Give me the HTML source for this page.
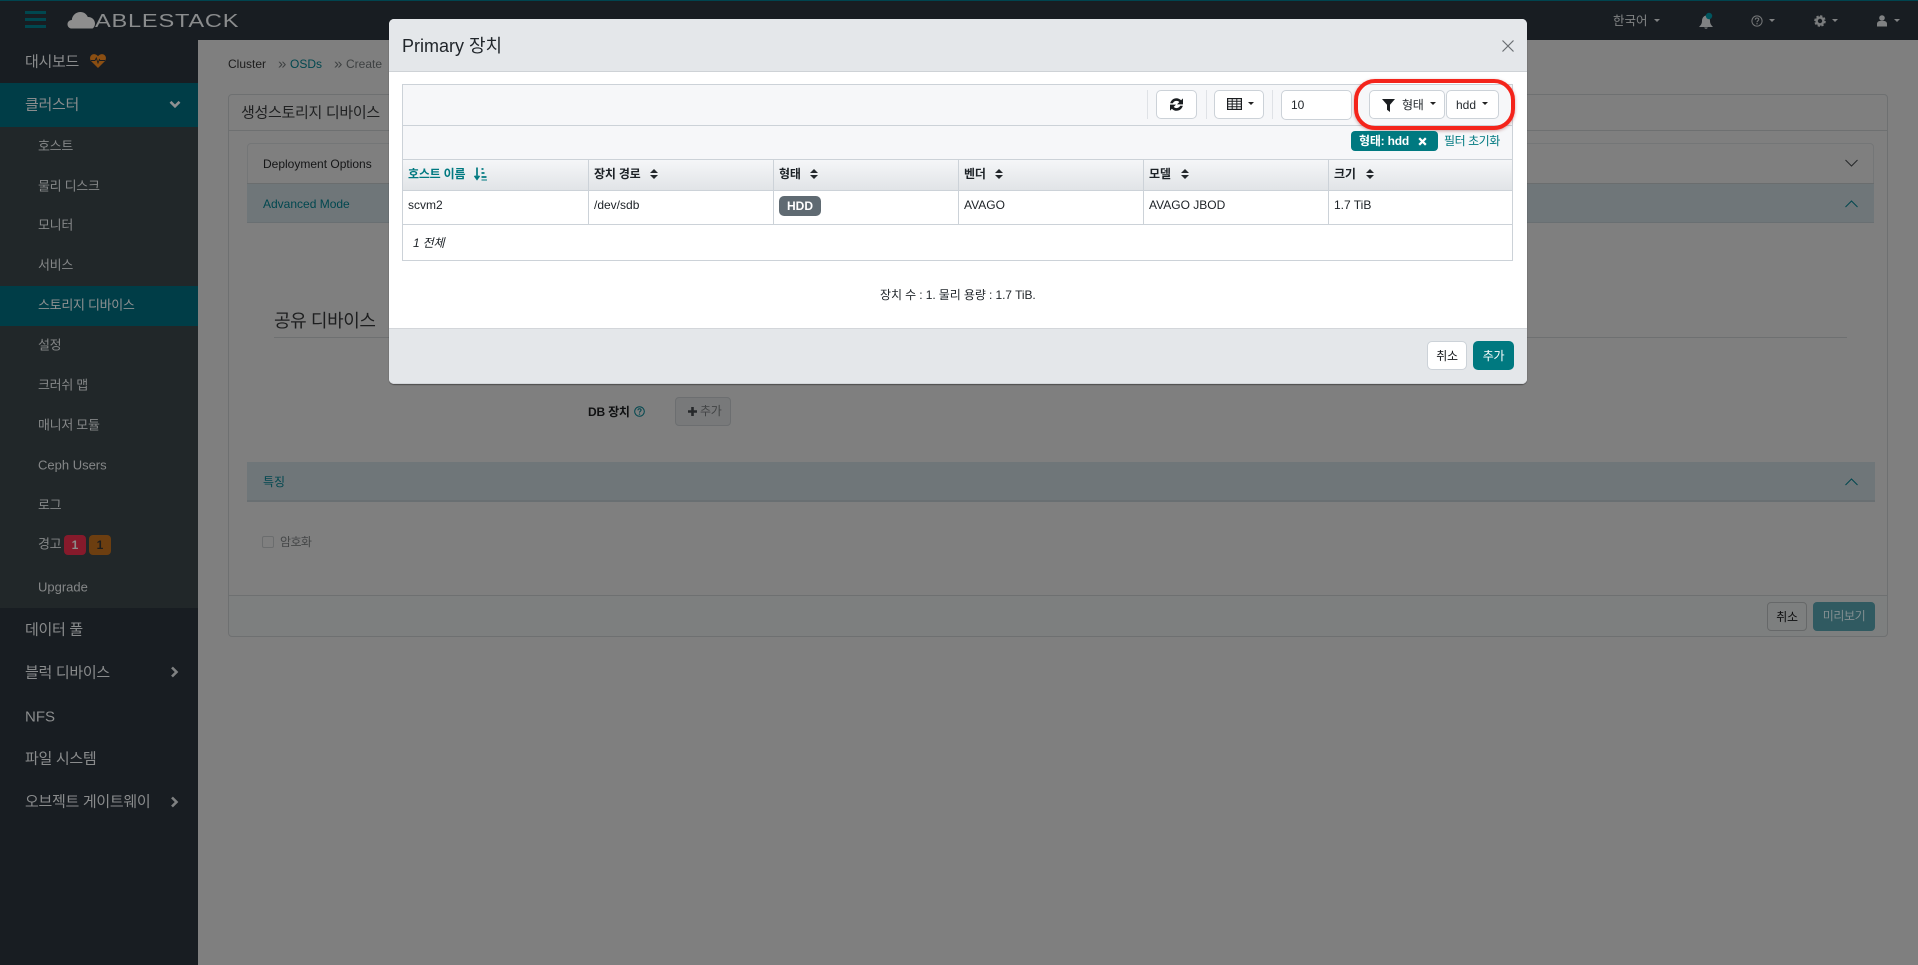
<!DOCTYPE html>
<html lang="ko">
<head>
<meta charset="utf-8">
<title>ABLESTACK</title>
<style>
html,body{margin:0;padding:0;width:1918px;height:965px;overflow:hidden;background:#7f7f7f;font-family:"Liberation Sans","Noto Sans CJK KR",sans-serif;}
.b{position:absolute;box-sizing:border-box;}
.t{position:absolute;white-space:nowrap;line-height:1;transform:translateY(-50%);}
svg{position:absolute;overflow:visible;}
.top{font-size:15px;color:#8a8c8d;left:25px;letter-spacing:-.3px}
.sub{font-size:13px;color:#858788;left:38px;letter-spacing:-.3px}
.th{font-size:12px;font-weight:bold;color:#1c2126;top:174px;letter-spacing:-.2px}
.td{font-size:12px;color:#1c2126;top:205px}
.btn{background:#fff;border:1px solid #ccd2d8;border-radius:5px;}
.caret{position:absolute;width:0;height:0;border-left:3.5px solid transparent;border-right:3.5px solid transparent;border-top:3.5px solid #222;}
.dcaret{border-top-color:#808283}
.sep{position:absolute;width:1px;background:#dfe2e6;top:90px;height:29px}
.vl{position:absolute;width:1px;background:#ccd2d8;top:159px;height:65px}
</style>
</head>
<body>
<!-- top bar -->
<div class="b" style="left:0;top:0;width:1918px;height:40px;background:#181d22;border-top:1px solid #00444f"></div>
<div class="b" style="left:25px;top:11px;width:21px;height:3px;background:#00474f"></div>
<div class="b" style="left:25px;top:18px;width:21px;height:3px;background:#00474f"></div>
<div class="b" style="left:25px;top:25px;width:21px;height:3px;background:#00474f"></div>
<svg style="left:67px;top:11px" width="29" height="18" viewBox="0 0 29 18"><path d="M5 17.5C2 17.5 .5 15.5 .5 13.2 .5 10.8 2.4 9 4.8 9 5.2 4.2 9 1 13.4 1 16.8 1 19.6 3 20.8 6 24.8 5.8 28 8.8 28 12.6 28 14.8 27 16.4 25.6 17.5Z" fill="#8e8e8e"/></svg>
<div class="t" style="left:95px;top:21px;font-size:18px;color:#8a8c8d;letter-spacing:.6px;transform:translateY(-50%) scaleX(1.31);transform-origin:left center;font-weight:normal">ABLESTACK</div>

<div class="t" style="left:1613px;top:21px;font-size:12.5px;color:#828485">한국어</div>
<div class="caret dcaret" style="left:1654px;top:19px"></div>
<svg style="left:1698px;top:12px" width="20" height="18" viewBox="0 0 20 18"><path d="M8 3.5C5.5 4 4 6.2 4 8.8 4 11.5 3 13 1 15H15C13 13 12 11.5 12 8.8 12 6.2 10.5 4 8 3.5ZM6.2 15.5A1.9 1.9 0 0 0 9.8 15.5Z" fill="#808283"/><circle cx="11" cy="4" r="3.2" fill="#00565f"/></svg>
<svg style="left:1751px;top:15px" width="12" height="12" viewBox="0 0 12 12"><circle cx="6" cy="6" r="5.1" fill="none" stroke="#767879" stroke-width="1"/><path d="M4.2 4.7C4.3 3.6 5 3 6 3 7.1 3 7.8 3.7 7.8 4.5 7.8 5.7 6 5.7 6 7.2" fill="none" stroke="#767879" stroke-width="1"/><circle cx="6" cy="8.8" r=".7" fill="#767879"/></svg>
<div class="caret dcaret" style="left:1769px;top:19px"></div>
<svg style="left:1814px;top:15px" width="12" height="12" viewBox="0 0 12 12"><circle cx="6" cy="6" r="3.4" fill="none" stroke="#7a7c7d" stroke-width="2.4"/><circle cx="6" cy="6" r="4.6" fill="none" stroke="#7a7c7d" stroke-width="2.4" stroke-dasharray="2.2 1.4"/></svg>
<div class="caret dcaret" style="left:1832px;top:19px"></div>
<svg style="left:1877px;top:15px" width="10" height="12" viewBox="0 0 10 12"><circle cx="5" cy="3" r="2.8" fill="#808283"/><path d="M0 11.5V9C0 7 1.5 6 3 6H7C8.5 6 10 7 10 9V11.5Z" fill="#808283"/></svg>
<div class="caret dcaret" style="left:1894px;top:19px"></div>

<!-- sidebar -->
<div class="b" style="left:0;top:40px;width:198px;height:925px;background:#181d22"></div>
<div class="b" style="left:0;top:83px;width:198px;height:44px;background:#003d47"></div>
<div class="b" style="left:0;top:127px;width:198px;height:481px;background:#212729"></div>
<div class="b" style="left:0;top:286px;width:198px;height:40px;background:#003d47"></div>
<div class="t top" style="top:62px">대시보드</div>
<svg style="left:90px;top:54px" width="16" height="14" viewBox="0 0 16 14"><path d="M8 14 1.2 7.2C-.4 5.4-.3 2.6 1.3 1.2 3-.4 5.8-.3 8 2.2 10.2-.3 13-.4 14.7 1.2 16.3 2.6 16.4 5.4 14.8 7.2Z" fill="#8a4e12"/><path d="M1 6.5H5L6.3 4 8 9 9.4 5.5 10 6.5H15" fill="none" stroke="#181d22" stroke-width=".9"/></svg>
<div class="t top" style="top:105px">클러스터</div>
<svg style="left:169px;top:100px" width="12" height="9" viewBox="0 0 12 9"><path d="M1.5 1.8 6 6.3 10.5 1.8" fill="none" stroke="#8f9192" stroke-width="2.6"/></svg>
<div class="t sub" style="top:146px">호스트</div>
<div class="t sub" style="top:186px">물리 디스크</div>
<div class="t sub" style="top:225px">모니터</div>
<div class="t sub" style="top:265px">서비스</div>
<div class="t sub" style="top:305px;color:#8f9192">스토리지 디바이스</div>
<div class="t sub" style="top:345px">설정</div>
<div class="t sub" style="top:385px">크러쉬 맵</div>
<div class="t sub" style="top:425px">매니저 모듈</div>
<div class="t sub" style="top:465px;letter-spacing:0">Ceph Users</div>
<div class="t sub" style="top:505px">로그</div>
<div class="t sub" style="top:544px">경고</div>
<div class="b" style="left:64px;top:535px;width:22px;height:20px;background:#861a2b;border-radius:4px"></div>
<div class="t" style="left:64px;width:22px;text-align:center;top:545px;font-size:12px;font-weight:bold;color:#8c8c8c">1</div>
<div class="b" style="left:89px;top:535px;width:22px;height:20px;background:#6c3e10;border-radius:4px"></div>
<div class="t" style="left:89px;width:22px;text-align:center;top:545px;font-size:12px;font-weight:bold;color:#1d1d1d">1</div>
<div class="t sub" style="top:587px;letter-spacing:0">Upgrade</div>
<div class="t top" style="top:630px">데이터 풀</div>
<div class="t top" style="top:673px">블럭 디바이스</div>
<svg style="left:170px;top:666px" width="9" height="12" viewBox="0 0 9 12"><path d="M2 1.5 6.5 6 2 10.5" fill="none" stroke="#7f8182" stroke-width="2.6"/></svg>
<div class="t top" style="top:717px;letter-spacing:0">NFS</div>
<div class="t top" style="top:759px">파일 시스템</div>
<div class="t top" style="top:802px">오브젝트 게이트웨이</div>
<svg style="left:170px;top:796px" width="9" height="12" viewBox="0 0 9 12"><path d="M2 1.5 6.5 6 2 10.5" fill="none" stroke="#7f8182" stroke-width="2.6"/></svg>

<!-- main (dimmed) -->
<div class="t" style="left:228px;top:64px;font-size:12px;color:#1c1c1c">Cluster</div>
<div class="t" style="left:278px;top:64px;font-size:15px;color:#3e4142">»</div>
<div class="t" style="left:290px;top:64px;font-size:12px;color:#00474f">OSDs</div>
<div class="t" style="left:334px;top:64px;font-size:15px;color:#3e4142">»</div>
<div class="t" style="left:346px;top:64px;font-size:12px;color:#3e4142">Create</div>

<div class="b" style="left:228px;top:94px;width:1660px;height:543px;border:1px solid #6e7071;border-radius:4px"></div>
<div class="b" style="left:229px;top:130px;width:1658px;height:1px;background:#6e7071"></div>
<div class="t" style="left:241px;top:113px;font-size:15px;color:#1f2021;letter-spacing:-.3px">생성스토리지 디바이스</div>

<div class="b" style="left:247px;top:143px;width:1627px;height:80px;border:1px solid #747677;border-radius:4px 4px 0 0"></div>
<div class="b" style="left:247px;top:183px;width:1627px;height:40px;background:#6f7679;border-top:1px solid #6a6d6e;border-bottom:1px solid #696f72"></div>
<div class="t" style="left:263px;top:164px;font-size:12px;color:#151617">Deployment Options</div>
<div class="t" style="left:263px;top:204px;font-size:12px;color:#00474f">Advanced Mode</div>
<svg style="left:1845px;top:159px" width="13" height="8" viewBox="0 0 13 8"><path d="M.5 1 6.5 7 12.5 1" fill="none" stroke="#26282a" stroke-width="1"/></svg>
<svg style="left:1845px;top:200px" width="13" height="8" viewBox="0 0 13 8"><path d="M.5 7 6.5 1 12.5 7" fill="none" stroke="#00474f" stroke-width="1"/></svg>

<div class="t" style="left:274px;top:321px;font-size:18px;color:#1d1e1f;letter-spacing:-.4px">공유 디바이스</div>
<div class="b" style="left:274px;top:337px;width:1573px;height:1px;background:#6e7071"></div>

<div class="t" style="left:588px;top:412px;font-size:12px;font-weight:bold;color:#101112;letter-spacing:-.2px">DB 장치</div>
<svg style="left:634px;top:406px" width="11" height="11" viewBox="0 0 11 11"><circle cx="5.5" cy="5.5" r="4.8" fill="none" stroke="#00474f" stroke-width="1"/><path d="M3.9 4.3C4 3.3 4.6 2.8 5.5 2.8 6.5 2.8 7.1 3.4 7.1 4.1 7.1 5.2 5.5 5.2 5.5 6.6" fill="none" stroke="#00474f" stroke-width="1"/><circle cx="5.5" cy="8.1" r=".65" fill="#00474f"/></svg>
<div class="b" style="left:675px;top:397px;width:56px;height:29px;border:1px solid #6c6e70;border-radius:4px;background:#78797a"></div>
<svg style="left:688px;top:407px" width="9" height="9" viewBox="0 0 9 9"><path d="M3.2 0H5.8V3.2H9V5.8H5.8V9H3.2V5.8H0V3.2H3.2Z" fill="#26282a"/></svg>
<div class="t" style="left:700px;top:411px;font-size:12px;color:#424445;letter-spacing:-.3px">추가</div>

<div class="b" style="left:247px;top:462px;width:1628px;height:40px;background:#6f7679;border-bottom:2px solid #696f72"></div>
<div class="t" style="left:263px;top:482px;font-size:12px;color:#00474f">특징</div>
<svg style="left:1845px;top:478px" width="13" height="8" viewBox="0 0 13 8"><path d="M.5 7 6.5 1 12.5 7" fill="none" stroke="#00474f" stroke-width="1"/></svg>
<div class="b" style="left:262px;top:536px;width:12px;height:12px;border:1px solid #6b6d6e;border-radius:2px"></div>
<div class="t" style="left:280px;top:542px;font-size:12px;color:#454748;letter-spacing:-.6px">암호화</div>

<div class="b" style="left:229px;top:595px;width:1658px;height:41px;background:#7d7f7f;border-top:1px solid #6e7071;border-radius:0 0 4px 4px"></div>
<div class="b" style="left:1767px;top:602px;width:40px;height:29px;border:1px solid #666869;border-radius:4px"></div>
<div class="t" style="left:1767px;width:40px;text-align:center;top:617px;font-size:12px;color:#0e0e0f;letter-spacing:-.3px">취소</div>
<div class="b" style="left:1813px;top:602px;width:62px;height:29px;background:#305a61;border-radius:4px"></div>
<div class="t" style="left:1813px;width:62px;text-align:center;top:616px;font-size:12px;color:#838f91;letter-spacing:-.4px">미리보기</div>

<!-- modal -->
<div class="b" style="left:389px;top:19px;width:1138px;height:365px;background:#fff;border-radius:5px;box-shadow:0 1px 1px rgba(0,0,0,.4)"></div>
<div class="b" style="left:389px;top:19px;width:1138px;height:53px;background:#e4e7ea;border-bottom:1px solid #ced2d6;border-radius:5px 5px 0 0"></div>
<div class="t" style="left:402px;top:46px;font-size:18px;color:#21262b">Primary 장치</div>
<svg style="left:1502px;top:40px" width="12" height="12" viewBox="0 0 12 12"><path d="M.5.5 11.5 11.5M11.5.5.5 11.5" stroke="#6a6e72" stroke-width="1.2" fill="none"/></svg>
<div class="b" style="left:389px;top:328px;width:1138px;height:56px;background:#e4e7ea;border-top:1px solid #d3d6da;border-bottom:1px solid #d3d6da;border-radius:0 0 5px 5px"></div>

<!-- table -->
<div class="b" style="left:402px;top:84px;width:1111px;height:177px;border:1px solid #ccd2d8;background:#fff"></div>
<div class="b" style="left:403px;top:85px;width:1109px;height:74px;background:#f6f7f9"></div>
<div class="b" style="left:403px;top:125px;width:1109px;height:1px;background:#ccd2d8"></div>
<div class="b" style="left:403px;top:159px;width:1109px;height:32px;background:linear-gradient(#f5f6f8,#e1e4e7);border-top:1px solid #ccd2d8;border-bottom:1px solid #ccd2d8"></div>
<div class="b" style="left:403px;top:224px;width:1109px;height:1px;background:#ccd2d8"></div>
<div class="vl" style="left:588px"></div><div class="vl" style="left:773px"></div><div class="vl" style="left:958px"></div><div class="vl" style="left:1143px"></div><div class="vl" style="left:1328px"></div>

<div class="sep" style="left:1147px"></div><div class="sep" style="left:1206px"></div><div class="sep" style="left:1272px"></div>
<div class="b btn" style="left:1156px;top:90px;width:41px;height:29px"></div>
<svg style="left:1169px;top:97px" width="15" height="15" viewBox="0 0 15 15"><path d="M1.2 6.2C1.9 3.2 4.5 1.2 7.4 1.2 9.3 1.2 11 2 12.1 3.3L14 1.4V7.4H8L10.3 5.1C9.6 4.3 8.6 3.9 7.5 3.9 5.8 3.9 4.4 4.8 3.9 6.2ZM13.8 8.8C13.1 11.8 10.5 13.8 7.6 13.8 5.7 13.8 4 13 2.9 11.7L1 13.6V7.6H7L4.7 9.9C5.4 10.7 6.4 11.1 7.5 11.1 9.2 11.1 10.6 10.2 11.1 8.8Z" fill="#1a1d20"/></svg>
<div class="b btn" style="left:1214px;top:90px;width:50px;height:29px"></div>
<svg style="left:1227px;top:98px" width="15" height="12" viewBox="0 0 15 12"><rect x=".6" y=".6" width="13.8" height="10.8" fill="none" stroke="#1a1d20" stroke-width="1.2"/><path d="M.6 3.2H14.4M.6 6H14.4M.6 8.8H14.4M5.2.6V11.4M9.8.6V11.4" stroke="#1a1d20" stroke-width="1" fill="none"/></svg>
<div class="caret" style="left:1248px;top:102px"></div>
<div class="b btn" style="left:1281px;top:90px;width:71px;height:30px"></div>
<div class="t" style="left:1291px;top:105px;font-size:12px;color:#22272c">10</div>
<div class="b btn" style="left:1369px;top:90px;width:76px;height:29px"></div>
<svg style="left:1382px;top:99px" width="13" height="13" viewBox="0 0 13 13"><path d="M0 0H13L8 5.7V13L5 10.8V5.7Z" fill="#1a1d20"/></svg>
<div class="t" style="left:1402px;top:105px;font-size:12px;color:#262b30;letter-spacing:-.3px">형태</div>
<div class="caret" style="left:1430px;top:102px"></div>
<div class="b btn" style="left:1446px;top:90px;width:53px;height:29px"></div>
<div class="t" style="left:1456px;top:105px;font-size:12px;color:#262b30">hdd</div>
<div class="caret" style="left:1482px;top:102px"></div>
<div class="b" style="left:1354px;top:79px;width:161px;height:51px;border:4px solid #f4241b;border-radius:21px;box-shadow:0 1px 3px rgba(120,0,0,.35)"></div>

<div class="b" style="left:1351px;top:131px;width:87px;height:20px;background:#007980;border-radius:4px"></div>
<div class="t" style="left:1359px;top:141px;font-size:12px;font-weight:bold;color:#fff;letter-spacing:-.2px">형태: hdd</div>
<svg style="left:1418px;top:137px" width="9" height="9" viewBox="0 0 9 9"><path d="M1.2 1.2 7.8 7.8M7.8 1.2 1.2 7.8" stroke="#fff" stroke-width="2.2" fill="none"/></svg>
<div class="t" style="left:1444px;top:141px;font-size:12px;color:#007980;letter-spacing:-.45px">필터 초기화</div>

<div class="t th" style="left:408px;color:#007980">호스트 이름</div>
<svg style="left:474px;top:167px" width="13" height="14" viewBox="0 0 13 14"><path d="M3 0.5V11M.6 8.8 3 12.2 5.4 8.8" fill="none" stroke="#007980" stroke-width="1.7"/><path d="M7.5 2H9.5M7.5 6H10.5M7.5 10H12.5" stroke="#007980" stroke-width="1.7" fill="none"/><path d="M7.5 13H13" stroke="#007980" stroke-width="1"/></svg>
<div class="t th" style="left:594px">장치 경로</div>
<div class="t th" style="left:779px">형태</div>
<div class="t th" style="left:964px">벤더</div>
<div class="t th" style="left:1149px">모델</div>
<div class="t th" style="left:1334px">크기</div>
<svg style="left:650px;top:169px" width="8" height="10" viewBox="0 0 8 10"><path d="M0 4 4 0 8 4ZM0 6H8L4 10Z" fill="#23272b"/></svg>
<svg style="left:810px;top:169px" width="8" height="10" viewBox="0 0 8 10"><path d="M0 4 4 0 8 4ZM0 6H8L4 10Z" fill="#23272b"/></svg>
<svg style="left:995px;top:169px" width="8" height="10" viewBox="0 0 8 10"><path d="M0 4 4 0 8 4ZM0 6H8L4 10Z" fill="#23272b"/></svg>
<svg style="left:1181px;top:169px" width="8" height="10" viewBox="0 0 8 10"><path d="M0 4 4 0 8 4ZM0 6H8L4 10Z" fill="#23272b"/></svg>
<svg style="left:1366px;top:169px" width="8" height="10" viewBox="0 0 8 10"><path d="M0 4 4 0 8 4ZM0 6H8L4 10Z" fill="#23272b"/></svg>

<div class="t td" style="left:408px">scvm2</div>
<div class="t td" style="left:594px">/dev/sdb</div>
<div class="b" style="left:779px;top:196px;width:42px;height:20px;background:#5f6a72;border-radius:5px"></div>
<div class="t" style="left:779px;width:42px;text-align:center;top:206px;font-size:12px;font-weight:bold;color:#fff">HDD</div>
<div class="t td" style="left:964px">AVAGO</div>
<div class="t td" style="left:1149px">AVAGO JBOD</div>
<div class="t td" style="left:1334px">1.7 TiB</div>
<div class="t" style="left:413px;top:243px;font-size:12px;font-style:italic;color:#1c2126;letter-spacing:-.2px">1 전체</div>

<div class="t" style="left:880px;top:295px;font-size:12px;color:#22272c;letter-spacing:-.1px">장치 수 : 1. 물리 용량 : 1.7 TiB.</div>

<div class="b btn" style="left:1427px;top:341px;width:40px;height:29px"></div>
<div class="t" style="left:1427px;width:40px;text-align:center;top:356px;font-size:12px;color:#15181b;letter-spacing:-.3px">취소</div>
<div class="b" style="left:1473px;top:341px;width:41px;height:29px;background:#007980;border-radius:5px"></div>
<div class="t" style="left:1473px;width:41px;text-align:center;top:356px;font-size:12px;color:#fff;letter-spacing:-.3px">추가</div>
</body>
</html>
